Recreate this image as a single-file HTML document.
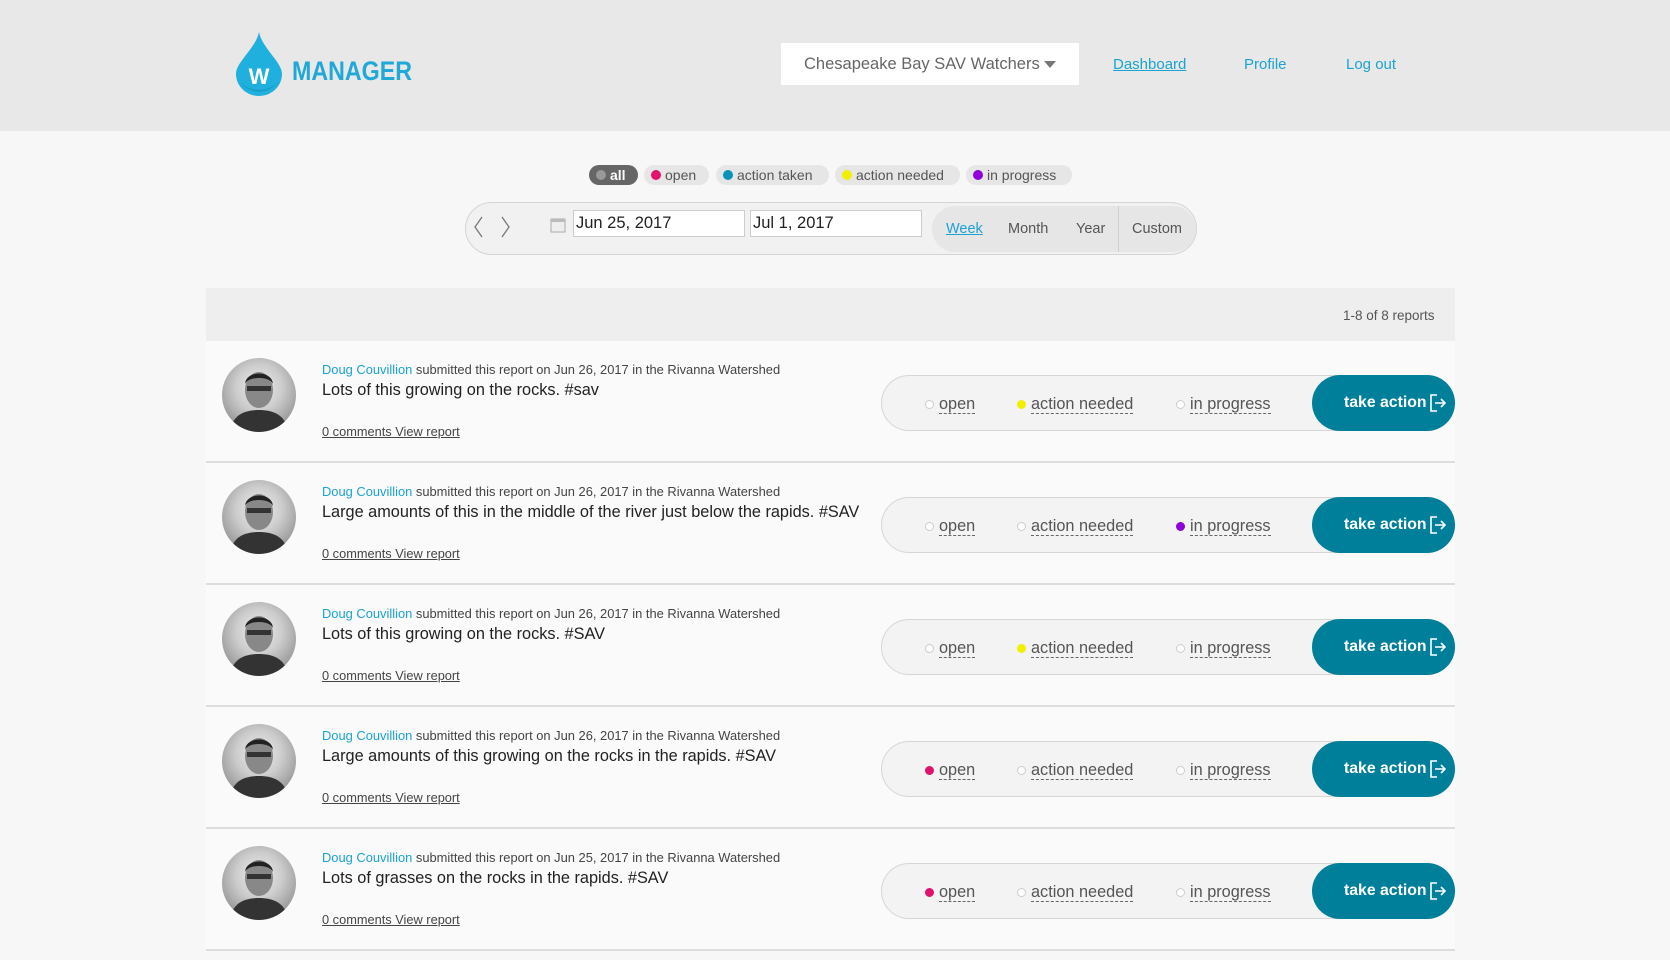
<!DOCTYPE html>
<html><head><meta charset="utf-8"><style>
*{box-sizing:border-box;margin:0;padding:0}
body{width:1670px;height:960px;overflow:hidden;background:#f7f7f7;font-family:"Liberation Sans",Arial,sans-serif;color:#333;position:relative}
.abs{position:absolute}
header{position:absolute;left:0;top:0;width:1670px;height:131px;background:#e8e8e8}
.nav{position:absolute;top:56px;font-size:15px;color:#1ba3d2}
.pill{position:absolute;top:165px;height:20px;border-radius:10px;background:#e6e6e6;font-size:14px;color:#555;line-height:20px;padding-left:21px}
.pill i{position:absolute;left:7px;top:5px;width:10px;height:10px;border-radius:50%}
.row{position:absolute;left:206px;width:1249px;height:122px;border-bottom:2px solid #ddd;background:#fafafa}
.av{position:absolute;left:16px;top:17px;width:74px;height:74px;border-radius:50%;overflow:hidden;background:radial-gradient(circle at 50% 40%,#eee 0,#ccc 40%,#999 75%)}
.meta{position:absolute;left:116px;top:21px;font-size:12.9px;color:#444}
.meta a{color:#1ba3d2}
.ttl{position:absolute;left:116px;top:40px;font-size:16.3px;color:#222}
.lnk{position:absolute;left:116px;top:83px;font-size:12.8px;color:#444;text-decoration:underline}
.st{position:absolute;left:675px;top:34px;width:574px;height:56px;border:1px solid #d6d6d6;border-radius:28px;background:#f3f3f3}
.opt{position:absolute;top:19px;font-size:16.3px;color:#555;border-bottom:1px dashed #666;line-height:18px}
.dot{position:absolute;top:24px;width:9px;height:9px;border-radius:50%;border:1px solid #ccc;background:#fff}
.btn{position:absolute;left:1106px;top:34px;width:143px;height:56px;border-radius:28px;background:#007f9b;color:#fff;font-weight:bold;font-size:15.8px;line-height:56px;padding-left:32px}
.btn svg{position:absolute;left:118px;top:19px}
</style></head><body>
<header>
<svg class="abs" style="left:236px;top:32px" width="46" height="64" viewBox="0 0 46 64"><path d="M23 0 C26 16 46 30 46 42 A23 22 0 0 1 0 42 C0 30 20 16 23 0Z" fill="#1fb0de"/><path d="M4 50 A23 22 0 0 0 42 50 A23 18 0 0 1 4 50Z" fill="#189bc5"/><text x="23" y="52" font-family="Liberation Sans" font-weight="bold" font-size="22" fill="#fff" text-anchor="middle">W</text></svg>
<div class="abs" style="left:292px;top:56px;font-size:27px;color:#1fa8d8;font-weight:bold;transform:scaleX(0.86);transform-origin:left">MANAGER</div>
<div class="abs" style="left:781px;top:43px;width:298px;height:42px;background:#fff;font-size:16.5px;color:#666;line-height:42px;padding-left:23px">Chesapeake Bay SAV Watchers<span style="position:absolute;left:263px;top:18px;border-left:6px solid transparent;border-right:6px solid transparent;border-top:7px solid #777"></span></div>
<div class="nav" style="left:1113px;text-decoration:underline">Dashboard</div>
<div class="nav" style="left:1244px">Profile</div>
<div class="nav" style="left:1346px">Log out</div>
</header>
<div class="pill" style="left:589px;width:49px;background:#666;color:#fff;font-weight:bold"><i style="background:#999"></i>all</div>
<div class="pill" style="left:644px;width:65px"><i style="background:#e0126e"></i>open</div>
<div class="pill" style="left:716px;width:113px"><i style="background:#0a92b8"></i>action taken</div>
<div class="pill" style="left:835px;width:125px"><i style="background:#f0f000"></i>action needed</div>
<div class="pill" style="left:966px;width:106px"><i style="background:#9000d8"></i>in progress</div>
<div class="abs" style="left:465px;top:202px;width:732px;height:53px;border:1px solid #d4d4d4;border-radius:27px;background:#f1f1f1"></div>
<svg class="abs" style="left:472px;top:215px" width="50" height="24"><path d="M10 2 L3 12 L10 22 M30 2 L37 12 L30 22" stroke="#777" fill="none" stroke-width="1.3"/></svg>
<svg class="abs" style="left:550px;top:217px" width="16" height="16"><rect x="1" y="2" width="14" height="13" fill="#eee" stroke="#aaa"/><rect x="1" y="2" width="14" height="3" fill="#bbb"/></svg>
<div class="abs" style="left:573px;top:210px;width:172px;height:27px;background:#fff;border:1px solid #ccc;font-size:16.5px;line-height:25px;padding-left:2px;color:#222">Jun 25, 2017</div>
<div class="abs" style="left:750px;top:210px;width:172px;height:27px;background:#fff;border:1px solid #ccc;font-size:16.5px;line-height:25px;padding-left:2px;color:#222">Jul 1, 2017</div>
<div class="abs" style="left:932px;top:206px;width:264px;height:46px;border-radius:23px;background:#e6e6e6"></div>
<div class="abs" style="left:1118px;top:206px;width:1px;height:46px;background:#d0d0d0"></div>
<div class="abs" style="left:946px;top:221px;font-size:14.5px;color:#1ba3d2;text-decoration:underline">Week</div>
<div class="abs" style="left:1008px;top:221px;font-size:14.5px;color:#555">Month</div>
<div class="abs" style="left:1076px;top:221px;font-size:14.5px;color:#555">Year</div>
<div class="abs" style="left:1132px;top:221px;font-size:14.5px;color:#555">Custom</div>
<div class="abs" style="left:206px;top:288px;width:1249px;height:53px;background:#eee"></div>
<div class="abs" style="left:1343px;top:308px;font-size:13.5px;color:#555">1-8 of 8 reports</div>

<div class="row" style="top:341px"><div class="av"><svg width="74" height="74"><path d="M8 74 C10 56 24 52 37 52 C50 52 64 56 66 74Z" fill="#333"/><ellipse cx="37" cy="32" rx="14" ry="18" fill="#888"/><path d="M23 26 C24 12 50 12 51 26 C48 18 26 18 23 26Z" fill="#222"/><rect x="25" y="28" width="24" height="5" fill="#333"/></svg></div><div class="meta"><a>Doug Couvillion</a> submitted this report on Jun 26, 2017 in the Rivanna Watershed</div><div class="ttl">Lots of this growing on the rocks. #sav</div><div class="lnk">0 comments View report</div>
<div class="st"><span class="dot" style="left:43px"></span><span class="opt" style="left:57px">open</span><span class="dot" style="left:135px;background:#f0f000;border-color:#f0f000"></span><span class="opt" style="left:149px">action needed</span><span class="dot" style="left:294px"></span><span class="opt" style="left:308px">in progress</span></div><div class="btn">take action<svg width="16" height="18"><path d="M7 1H1V17H7M5 9H15M11 5L15 9L11 13" stroke="#fff" stroke-width="1.6" fill="none"/></svg></div></div>

<div class="row" style="top:463px"><div class="av"><svg width="74" height="74"><path d="M8 74 C10 56 24 52 37 52 C50 52 64 56 66 74Z" fill="#333"/><ellipse cx="37" cy="32" rx="14" ry="18" fill="#888"/><path d="M23 26 C24 12 50 12 51 26 C48 18 26 18 23 26Z" fill="#222"/><rect x="25" y="28" width="24" height="5" fill="#333"/></svg></div><div class="meta"><a>Doug Couvillion</a> submitted this report on Jun 26, 2017 in the Rivanna Watershed</div><div class="ttl">Large amounts of this in the middle of the river just below the rapids. #SAV</div><div class="lnk">0 comments View report</div>
<div class="st"><span class="dot" style="left:43px"></span><span class="opt" style="left:57px">open</span><span class="dot" style="left:135px"></span><span class="opt" style="left:149px">action needed</span><span class="dot" style="left:294px;background:#9000d8;border-color:#9000d8"></span><span class="opt" style="left:308px">in progress</span></div><div class="btn">take action<svg width="16" height="18"><path d="M7 1H1V17H7M5 9H15M11 5L15 9L11 13" stroke="#fff" stroke-width="1.6" fill="none"/></svg></div></div>

<div class="row" style="top:585px"><div class="av"><svg width="74" height="74"><path d="M8 74 C10 56 24 52 37 52 C50 52 64 56 66 74Z" fill="#333"/><ellipse cx="37" cy="32" rx="14" ry="18" fill="#888"/><path d="M23 26 C24 12 50 12 51 26 C48 18 26 18 23 26Z" fill="#222"/><rect x="25" y="28" width="24" height="5" fill="#333"/></svg></div><div class="meta"><a>Doug Couvillion</a> submitted this report on Jun 26, 2017 in the Rivanna Watershed</div><div class="ttl">Lots of this growing on the rocks. #SAV</div><div class="lnk">0 comments View report</div>
<div class="st"><span class="dot" style="left:43px"></span><span class="opt" style="left:57px">open</span><span class="dot" style="left:135px;background:#f0f000;border-color:#f0f000"></span><span class="opt" style="left:149px">action needed</span><span class="dot" style="left:294px"></span><span class="opt" style="left:308px">in progress</span></div><div class="btn">take action<svg width="16" height="18"><path d="M7 1H1V17H7M5 9H15M11 5L15 9L11 13" stroke="#fff" stroke-width="1.6" fill="none"/></svg></div></div>

<div class="row" style="top:707px"><div class="av"><svg width="74" height="74"><path d="M8 74 C10 56 24 52 37 52 C50 52 64 56 66 74Z" fill="#333"/><ellipse cx="37" cy="32" rx="14" ry="18" fill="#888"/><path d="M23 26 C24 12 50 12 51 26 C48 18 26 18 23 26Z" fill="#222"/><rect x="25" y="28" width="24" height="5" fill="#333"/></svg></div><div class="meta"><a>Doug Couvillion</a> submitted this report on Jun 26, 2017 in the Rivanna Watershed</div><div class="ttl">Large amounts of this growing on the rocks in the rapids. #SAV</div><div class="lnk">0 comments View report</div>
<div class="st"><span class="dot" style="left:43px;background:#e0126e;border-color:#e0126e"></span><span class="opt" style="left:57px">open</span><span class="dot" style="left:135px"></span><span class="opt" style="left:149px">action needed</span><span class="dot" style="left:294px"></span><span class="opt" style="left:308px">in progress</span></div><div class="btn">take action<svg width="16" height="18"><path d="M7 1H1V17H7M5 9H15M11 5L15 9L11 13" stroke="#fff" stroke-width="1.6" fill="none"/></svg></div></div>

<div class="row" style="top:829px"><div class="av"><svg width="74" height="74"><path d="M8 74 C10 56 24 52 37 52 C50 52 64 56 66 74Z" fill="#333"/><ellipse cx="37" cy="32" rx="14" ry="18" fill="#888"/><path d="M23 26 C24 12 50 12 51 26 C48 18 26 18 23 26Z" fill="#222"/><rect x="25" y="28" width="24" height="5" fill="#333"/></svg></div><div class="meta"><a>Doug Couvillion</a> submitted this report on Jun 25, 2017 in the Rivanna Watershed</div><div class="ttl">Lots of grasses on the rocks in the rapids. #SAV</div><div class="lnk">0 comments View report</div>
<div class="st"><span class="dot" style="left:43px;background:#e0126e;border-color:#e0126e"></span><span class="opt" style="left:57px">open</span><span class="dot" style="left:135px"></span><span class="opt" style="left:149px">action needed</span><span class="dot" style="left:294px"></span><span class="opt" style="left:308px">in progress</span></div><div class="btn">take action<svg width="16" height="18"><path d="M7 1H1V17H7M5 9H15M11 5L15 9L11 13" stroke="#fff" stroke-width="1.6" fill="none"/></svg></div></div>
</body></html>
